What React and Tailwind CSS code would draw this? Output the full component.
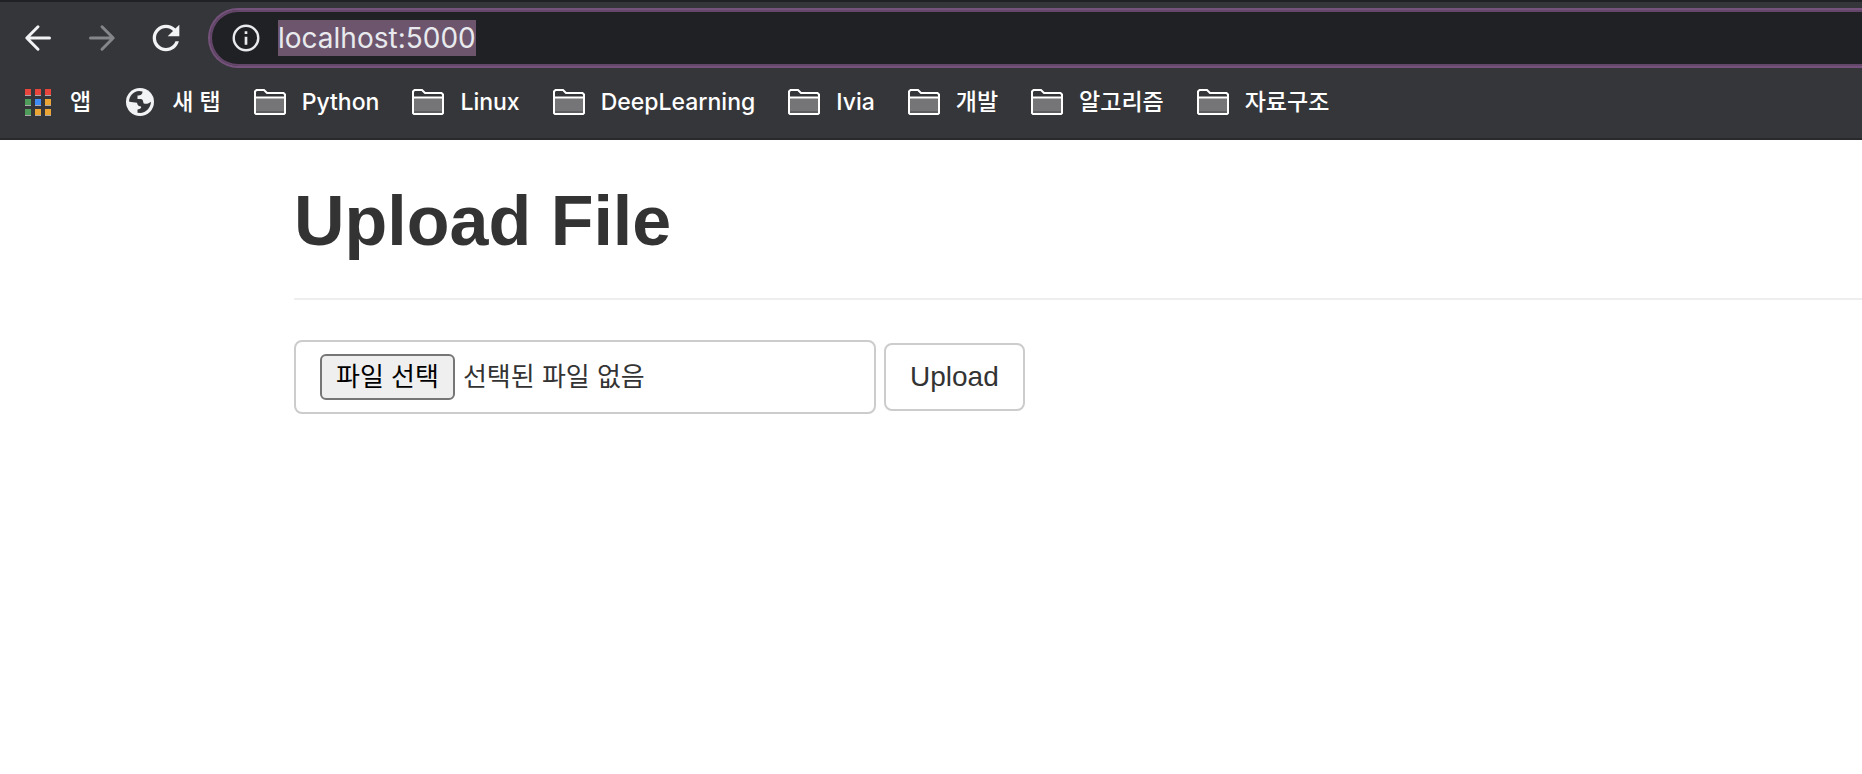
import { useEffect, useRef, useState } from "react";

const uiFont = "font-['Inter','Noto_Sans_CJK_KR',sans-serif]";
const pageFont = "font-['Liberation_Sans','Noto_Sans_CJK_KR',sans-serif]";

function BackIcon() {
  return (
    <svg className="size-8" viewBox="0 0 32 32" fill="none" stroke="currentColor" strokeWidth="3" strokeLinecap="round" strokeLinejoin="round" aria-hidden="true">
      <path d="M27.5 16H5M16 4.8 4.800 16 16 27.2" />
    </svg>
  );
}

function ForwardIcon() {
  return (
    <svg className="size-8" viewBox="0 0 32 32" fill="none" stroke="currentColor" strokeWidth="3" strokeLinecap="round" strokeLinejoin="round" aria-hidden="true">
      <path d="M4.5 16H27M16 4.8 27.2 16 16 27.2" />
    </svg>
  );
}

function ReloadIcon() {
  return (
    <svg className="size-10" viewBox="0 0 24 24" fill="currentColor" aria-hidden="true">
      <path d="M17.65 6.35C16.2 4.9 14.21 4 12 4c-4.42 0-7.99 3.58-7.99 8s3.57 8 7.99 8c3.73 0 6.84-2.55 7.73-6h-2.08c-.82 2.33-3.04 4-5.65 4-3.31 0-6-2.69-6-6s2.69-6 6-6c1.66 0 3.14.69 4.22 1.78L13 11h7V4l-2.35 2.35z" />
    </svg>
  );
}

function InfoIcon() {
  return (
    <svg className="size-8 shrink-0 text-[#e8eaed]" viewBox="0 0 24 24" aria-hidden="true">
      <circle cx="12" cy="12" r="9.2" fill="none" stroke="currentColor" strokeWidth="1.8" />
      <path fill="currentColor" d="M11 7h2v2h-2zM11 11h2v6h-2z" />
    </svg>
  );
}

function AppsIcon() {
  const cells = [
    [3, 3, "#e8453c"], [13, 3, "#e8453c"], [23, 3, "#e8453c"],
    [3, 13, "#4f9c5b"], [13, 13, "#3f8cf4"], [23, 13, "#eba535"],
    [3, 23, "#4f9c5b"], [13, 23, "#eba535"], [23, 23, "#eba535"],
  ];
  return (
    <svg className="size-8" viewBox="0 0 32 32" shapeRendering="crispEdges" aria-hidden="true">
      {cells.map(([x, y, color]) => (
        <g key={`${x}-${y}`}>
          <rect x={x} y={y} width="6" height="7" fill="#a9a9ab" />
          <rect x={x} y={y} width="6" height="6" fill={color} />
        </g>
      ))}
    </svg>
  );
}

function GlobeIcon() {
  return (
    <svg className="size-8 text-[#f1f3f4]" viewBox="0 0 32 32" aria-hidden="true">
      <circle cx="16" cy="16" r="14" fill="currentColor" />
      <path
        fill="#35363a"
        d="M5 15.500C5.300 10 9.500 5.500 15 5.100L18.500 5.500C18.500 8.500 17 9.300 13.500 9.600V13H17C19 13.300 19.200 15.500 19.500 17.300C22 18.500 25 17.500 27 15.800C26.800 21.500 22.500 26.300 17 26.900L13.500 26.700V23.500C17 23 17.500 21.500 17 20.500C14 20.500 13.500 18.500 13 16.800C10.500 16.300 7.500 16.500 5 15.500z"
      />
    </svg>
  );
}

function FolderIcon() {
  return (
    <svg className="size-8" viewBox="0 0 32 32" aria-hidden="true">
      <path d="M1 27V5.500L2.500 4H10l3 3h16.500L31 8.500V27l-1 1H2z" fill="#35363a" stroke="#fff" strokeWidth="2" />
      <path d="M2 12h28v15H2z" fill="#757577" />
      <path d="M2 25h28v2H2z" fill="#5c5d60" />
      <path d="M1 11.500h30" stroke="#fff" strokeWidth="2" />
    </svg>
  );
}

const bookmarks = [
  { label: "앱", Icon: AppsIcon },
  { label: "새 탭", Icon: GlobeIcon },
  { label: "Python", Icon: FolderIcon },
  { label: "Linux", Icon: FolderIcon },
  { label: "DeepLearning", Icon: FolderIcon },
  { label: "Ivia", Icon: FolderIcon },
  { label: "개발", Icon: FolderIcon },
  { label: "알고리즘", Icon: FolderIcon },
  { label: "자료구조", Icon: FolderIcon },
];

function AddressBar() {
  const ref = useRef(null);
  const [url, setUrl] = useState("localhost:5000");

  useEffect(() => {
    ref.current.focus();
    ref.current.select();
  }, []);

  return (
    <div className="min-w-0 flex-1 rounded-l-full border-2 border-r-0 border-[#75527b]">
      <div className="flex h-14 items-center gap-4 rounded-l-full border-2 border-r-0 border-[#64466a] bg-[#202124] pl-[18px]">
        <InfoIcon />
        <input
          ref={ref}
          type="text"
          aria-label="주소창"
          value={url}
          onChange={(e) => setUrl(e.target.value)}
          className="h-9 min-w-0 flex-1 bg-transparent text-[28px] leading-9 text-[#e8eaed] outline-none selection:bg-[#6d566e]/99 selection:text-[#e8eaed]"
        />
      </div>
    </div>
  );
}

function BrowserChrome() {
  return (
    <header className={`border-y-2 border-t-[#202124] border-b-[#28292b] bg-[#35363a] ${uiFont}`}>
      <div className="flex items-center pt-1.5 pl-1.5">
        <div className="flex pr-2.5 text-[#f1f3f4]">
          <button type="button" aria-label="뒤로" className="flex h-12 w-16 items-center justify-center">
            <BackIcon />
          </button>
          <button type="button" aria-label="앞으로" className="flex h-12 w-16 items-center justify-center text-[#85868a]">
            <ForwardIcon />
          </button>
          <button type="button" aria-label="새로고침" className="flex h-12 w-16 items-center justify-center">
            <ReloadIcon />
          </button>
        </div>
        <AddressBar />
      </div>
      <nav aria-label="북마크" className="flex h-[70px] items-center gap-[33px] overflow-hidden pb-[2px] pl-[22px]">
        {bookmarks.map(({ label, Icon }) => (
          <a key={label} href="#" className="flex shrink-0 items-center gap-4 text-[23px] leading-8 font-medium text-white">
            <Icon />
            <span>{label}</span>
          </a>
        ))}
      </nav>
    </header>
  );
}

function UploadForm() {
  const [fileName, setFileName] = useState("");
  return (
    <form className="flex items-center gap-2 text-[#333]" onSubmit={(e) => e.preventDefault()}>
      <label htmlFor="file" className="flex w-[582px] items-center gap-2 rounded-lg border-2 border-[#ccc] px-6 py-3 text-[26px] leading-[42px] focus-within:border-[#66afe9]">
        <input id="file" type="file" className="sr-only" onChange={(e) => setFileName(e.target.files[0]?.name ?? "")} />
        <span className="shrink-0 rounded-md border-2 border-[#767676] bg-[#efefef] px-3.5 text-black">파일 선택</span>
        <span className="truncate">{fileName || "선택된 파일 없음"}</span>
      </label>
      <button type="submit" className="rounded-lg border-2 border-[#ccc] bg-white px-6 py-3 text-[28px] leading-10">
        Upload
      </button>
    </form>
  );
}

export default function App() {
  return (
    <div className="min-h-screen bg-white">
      <BrowserChrome />
      <main className={`pt-10 pl-[294px] ${pageFont}`}>
        <h1 className="border-b-2 border-[#eee] pb-9 text-[70px] leading-[82px] font-bold text-[#333]">Upload File</h1>
        <div className="pt-10">
          <UploadForm />
        </div>
      </main>
    </div>
  );
}
